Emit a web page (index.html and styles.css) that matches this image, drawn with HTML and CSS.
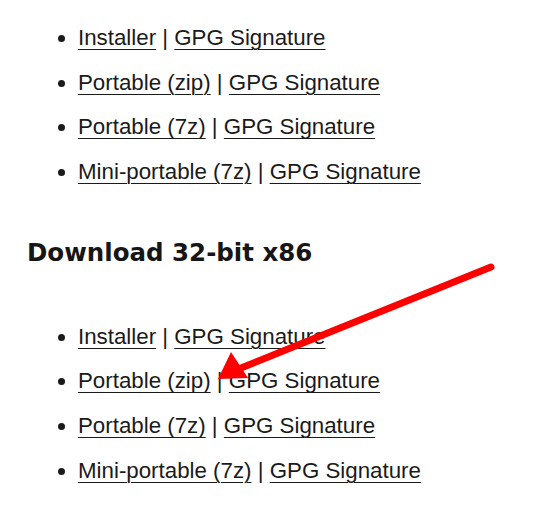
FILE: index.html
```html
<!DOCTYPE html>
<html>
<head>
<meta charset="utf-8">
<link rel="stylesheet" href="styles.css">
</head>
<body>
<div class="page">
  <ul class="dl-list first">
    <li><a href="#">Installer</a> | <a href="#">GPG Signature</a></li>
    <li><a href="#">Portable (zip)</a> | <a href="#">GPG Signature</a></li>
    <li><a href="#">Portable (7z)</a> | <a href="#">GPG Signature</a></li>
    <li><a href="#">Mini-portable (7z)</a> | <a href="#">GPG Signature</a></li>
  </ul>
  <h2 class="section-title">Download 32-bit x86</h2>
  <ul class="dl-list">
    <li><a href="#">Installer</a> | <a href="#">GPG Signature</a></li>
    <li><a href="#">Portable (zip)</a> | <a href="#">GPG Signature</a></li>
    <li><a href="#">Portable (7z)</a> | <a href="#">GPG Signature</a></li>
    <li><a href="#">Mini-portable (7z)</a> | <a href="#">GPG Signature</a></li>
  </ul>
  <svg class="arrow" width="560" height="520" viewBox="0 0 560 520">
    <line x1="491" y1="267" x2="236" y2="370" stroke="#ff0000" stroke-width="7" stroke-linecap="round"/>
    <polygon points="218,379 231,352 248,378" fill="#ff0000"/>
  </svg>
</div>
</body>
</html>
```
FILE: styles.css
```css
html, body {
  margin: 0;
  padding: 0;
  background: #ffffff;
}
.page {
  position: relative;
  width: 560px;
  height: 520px;
  overflow: hidden;
  padding-left: 26px;
  box-sizing: border-box;
  font-family: "Liberation Sans", Arial, sans-serif;
  color: #1a1a1a;
}
.dl-list {
  margin: 0;
  padding-left: 52px;
  font-size: 22.3px;
  line-height: 34px;
}
.dl-list.first {
  padding-top: 21px;
}
.dl-list li + li {
  margin-top: 10.7px;
}
.dl-list a {
  color: #1a1a1a;
  text-decoration: underline;
  text-decoration-thickness: 1px;
  text-underline-offset: 4px;
}
.section-title {
  margin: 47px 0 49.7px;
  padding-left: 1px;
  font-family: "DejaVu Sans", sans-serif;
  font-weight: bold;
  font-size: 24.5px;
  line-height: 34px;
  color: #161616;
}
.arrow {
  position: absolute;
  left: 0;
  top: 0;
  pointer-events: none;
}
```
